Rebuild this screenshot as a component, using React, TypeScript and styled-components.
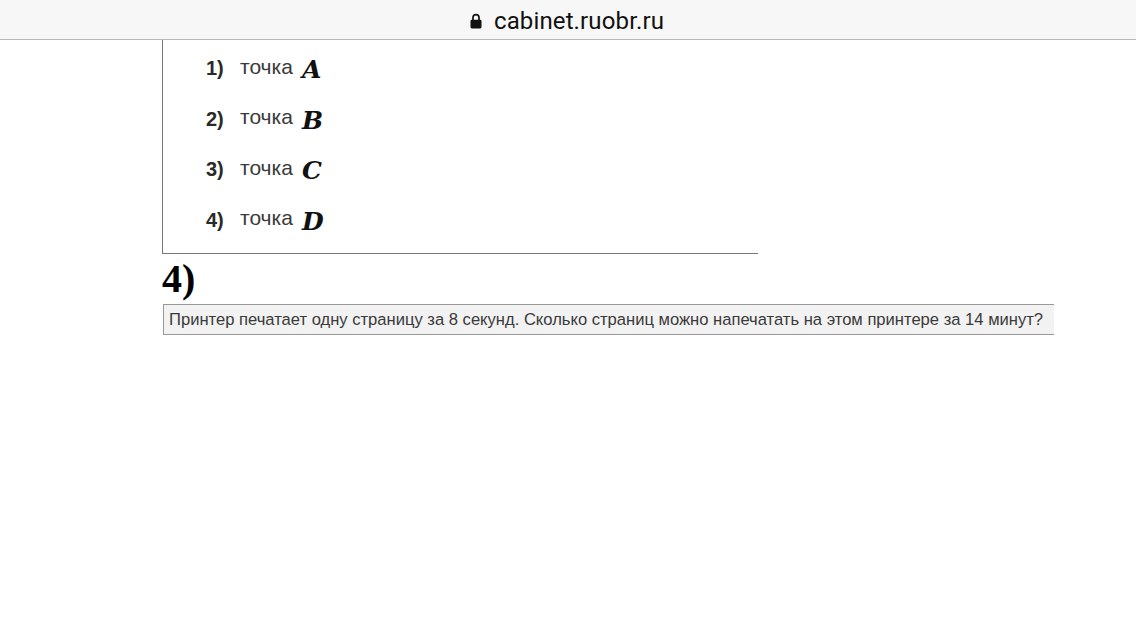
import React from 'react';
import styled, { createGlobalStyle } from 'styled-components';

const GlobalStyle = createGlobalStyle`
  html, body {
    margin: 0;
    padding: 0;
    background: #fff;
    overflow: hidden;
  }
`;

const Page = styled.div`
  width: 1136px;
  height: 640px;
  display: flex;
  flex-direction: column;
  background: #fff;
`;

const AddressBar = styled.header`
  height: 36px;
  flex: none;
  display: flex;
  align-items: center;
  justify-content: center;
  gap: 12px;
  background: #f7f7f7;
  border-bottom: 1px solid #b8b8b8;
  padding: 3px 2px 0 0;
`;

const Url = styled.span`
  font-family: Roboto, "Liberation Sans", sans-serif;
  font-size: 24px;
  letter-spacing: 0.13px;
  color: #111;
`;

const Content = styled.main`
  margin-left: 162px;
  display: flex;
  flex-direction: column;
  align-items: flex-start;
`;

const OptionsBox = styled.div`
  width: 596px;
  height: 214px;
  box-sizing: border-box;
  border-left: 1px solid #777;
  border-bottom: 1px solid #777;
  padding: 16px 0 0 43px;
  display: flex;
  flex-direction: column;
  gap: 25.6px;
`;

const Option = styled.div`
  height: 25px;
  display: flex;
  align-items: center;
`;

const OptionNumber = styled.span`
  width: 34px;
  font-family: "Liberation Sans", Arial, sans-serif;
  font-size: 20px;
  font-weight: 700;
  color: #2a2a2a;
`;

const OptionText = styled.span`
  font-family: "Liberation Sans", Arial, sans-serif;
  font-size: 21px;
  color: #3a3a3a;
  margin-top: -4px;
  width: 62px;
`;

const PointName = styled.span`
  font-family: "DejaVu Serif", "Liberation Serif", serif;
  font-size: 25px;
  font-weight: 700;
  font-style: italic;
  color: #111;
  margin-top: 2px;
`;

const QuestionNumber = styled.h2`
  margin: 0;
  height: 50px;
  font-family: "Liberation Serif", "Times New Roman", serif;
  font-size: 40px;
  line-height: 50px;
  font-weight: 700;
  color: #000;
`;

const Question = styled.div`
  margin-left: 1px;
  width: 891px;
  height: 31px;
  box-sizing: border-box;
  border-top: 1px solid #999;
  border-bottom: 1px solid #999;
  border-left: 1px solid #999;
  background: #f2f2f2;
  padding-left: 5px;
  display: flex;
  align-items: center;
  font-family: "Liberation Sans", Arial, sans-serif;
  font-size: 16.58px;
  color: #3a3a3a;
  white-space: nowrap;
`;

const options = [
  { n: '1)', point: 'A' },
  { n: '2)', point: 'B' },
  { n: '3)', point: 'C' },
  { n: '4)', point: 'D' },
];

function LockIcon() {
  return (
    <svg width="12" height="16" viewBox="0 0 12 16" aria-hidden="true">
      <path d="M3 7V4.6C3 2.8 4.3 1.6 6 1.6s3 1.2 3 3V7" fill="none" stroke="#111" strokeWidth="1.7" />
      <rect x="0.5" y="6.8" width="11" height="8.6" rx="1.3" fill="#111" />
    </svg>
  );
}

export default function App() {
  return (
    <Page>
      <GlobalStyle />
      <AddressBar>
        <LockIcon />
        <Url>cabinet.ruobr.ru</Url>
      </AddressBar>
      <Content>
        <OptionsBox>
          {options.map((o) => (
            <Option key={o.n}>
              <OptionNumber>{o.n}</OptionNumber>
              <OptionText>точка</OptionText>
              <PointName>{o.point}</PointName>
            </Option>
          ))}
        </OptionsBox>
        <QuestionNumber>4)</QuestionNumber>
        <Question>Принтер печатает одну страницу за 8 секунд. Сколько страниц можно напечатать на этом принтере за 14 минут?</Question>
      </Content>
    </Page>
  );
}
